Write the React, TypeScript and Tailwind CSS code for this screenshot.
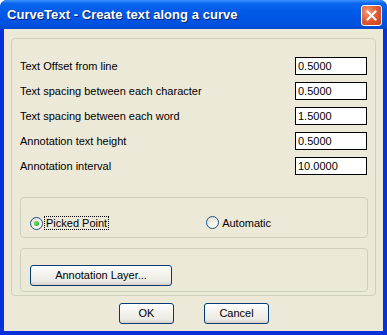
import React from "react";

const rows = [
  ["Text Offset from line", "0.5000"],
  ["Text spacing between each character", "0.5000"],
  ["Text spacing between each word", "1.5000"],
  ["Annotation text height", "0.5000"],
  ["Annotation interval", "10.0000"],
];

function Radio({ checked }: { checked?: boolean }) {
  return (
    <span className="relative inline-block w-[13px] h-[13px] rounded-full border border-[#1c5180] bg-[linear-gradient(135deg,#dcd9cf_0%,#f3f2ec_50%,#ffffff_100%)] shrink-0">
      {checked && (
        <span className="absolute left-[3px] top-[3px] w-[5px] h-[5px] rounded-full bg-[radial-gradient(circle_at_40%_40%,#6fe06f,#21a121)]" />
      )}
    </span>
  );
}

function Button({ children, className }: { children: React.ReactNode; className?: string }) {
  return (
    <div
      className={
        "flex items-center justify-center h-[21px] rounded-[3px] border border-[#003c74] bg-[linear-gradient(180deg,#ffffff_0%,#f4f3ee_40%,#ecebe6_80%,#d6d0c5_100%)] text-[11px] text-black " +
        (className ?? "")
      }
    >
      {children}
    </div>
  );
}

export default function App() {
  return (
    <div
      className="w-[387px] h-[335px] flex flex-col overflow-hidden rounded-t-[7px] bg-[#0831d9]"
      style={{ fontFamily: '"Liberation Sans", Arial, sans-serif' }}
    >
      {/* title bar */}
      <div className="h-[29px] shrink-0 flex items-center pl-[7px] pr-[5px] bg-[linear-gradient(180deg,#3d95ff_0%,#0a66ee_12%,#005ae8_40%,#0054e3_70%,#0050dc_90%,#0046c8_100%)]">
        <span className="text-white font-bold text-[13px] tracking-[0.05px] [text-shadow:1px_1px_0_#0a1f6e] flex-1 mt-[1px]">
          CurveText - Create text along a curve
        </span>
        <div className="w-[21px] h-[21px] rounded-[3px] border border-white bg-[radial-gradient(circle_at_30%_30%,#f29a78_0%,#e05a33_50%,#c4401c_100%)] flex items-center justify-center mt-[1px]">
          <svg width="11" height="11" viewBox="0 0 11 11">
            <path d="M1.5 1.5 L9.5 9.5 M9.5 1.5 L1.5 9.5" stroke="white" strokeWidth="2" strokeLinecap="square" />
          </svg>
        </div>
      </div>
      {/* body */}
      <div className="flex-1 mx-[4px] mb-[4px] bg-[#ece9d8] flex flex-col">
        <div className="ml-[7px] mt-[9px] w-[365px] h-[258px] border border-[#d0d0bf] rounded-[4px] flex flex-col">
          <div className="flex flex-col gap-[7px] mt-[18px] ml-[8px] mr-[8px]">
            {rows.map(([label, val]) => (
              <div key={label} className="flex items-center h-[18px]">
                <span className="flex-1 text-[11px] text-black">{label}</span>
                <div className="w-[72px] h-[18px] border border-black bg-white text-[11px] text-black pl-[2px] flex items-center">
                  {val}
                </div>
              </div>
            ))}
          </div>
          <div className="ml-[8px] mt-[22px] w-[348px] h-[41px] border border-[#d0d0bf] rounded-[4px] flex items-start pt-[18px]">
            <div className="ml-[9px] flex items-center">
              <Radio checked />
              <span className="ml-[1px] px-[1px] border border-dotted border-black text-[11px] text-black leading-[12px]">
                Picked Point
              </span>
            </div>
            <div className="ml-[97px] flex items-center">
              <Radio />
              <span className="ml-[3px] text-[11px] text-black leading-[12px]">Automatic</span>
            </div>
          </div>
          <div className="ml-[8px] mt-[10px] w-[348px] h-[44px] border border-[#d0d0bf] rounded-[4px] pt-[16px] pl-[9px]">
            <Button className="w-[142px]">Annotation Layer...</Button>
          </div>
        </div>
        <div className="flex mt-[7px] ml-[115px] gap-[30px]">
          <Button className="w-[55px]">OK</Button>
          <Button className="w-[65px]">Cancel</Button>
        </div>
      </div>
    </div>
  );
}
